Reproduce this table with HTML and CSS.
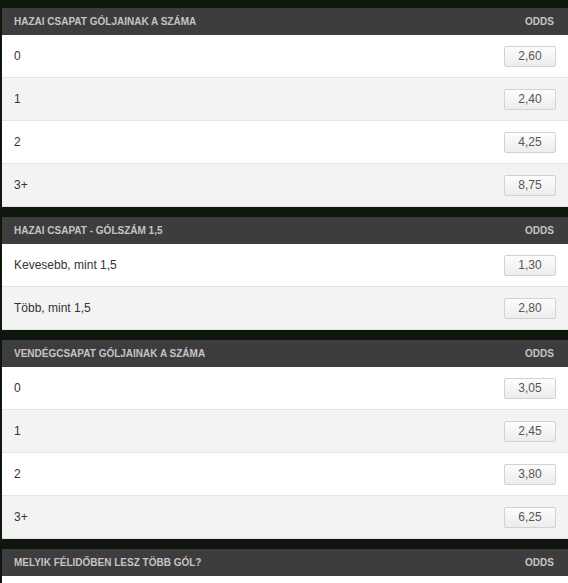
FILE: index.html
```html
<!DOCTYPE html>
<html lang="hu">

<head>
    <meta charset="UTF-8">
    <meta name="viewport" content="width=device-width, initial-scale=1.0">
    <title>Odds</title>
    <link rel="stylesheet" href="styles.css">
</head>

<body>
    <div class="market">
        <div class="market-head">
            <span>Hazai csapat góljainak a száma</span>
            <span>Odds</span>
        </div>
        <div class="row"><span>0</span><button class="odd">2,60</button></div>
        <div class="row"><span>1</span><button class="odd">2,40</button></div>
        <div class="row"><span>2</span><button class="odd">4,25</button></div>
        <div class="row"><span>3+</span><button class="odd">8,75</button></div>
    </div>

    <div class="market">
        <div class="market-head">
            <span>Hazai csapat - gólszám 1,5</span>
            <span>Odds</span>
        </div>
        <div class="row"><span>Kevesebb, mint 1,5</span><button class="odd">1,30</button></div>
        <div class="row"><span>Több, mint 1,5</span><button class="odd">2,80</button></div>
    </div>

    <div class="market">
        <div class="market-head">
            <span>Vendégcsapat góljainak a száma</span>
            <span>Odds</span>
        </div>
        <div class="row"><span>0</span><button class="odd">3,05</button></div>
        <div class="row"><span>1</span><button class="odd">2,45</button></div>
        <div class="row"><span>2</span><button class="odd">3,80</button></div>
        <div class="row"><span>3+</span><button class="odd">6,25</button></div>
    </div>

    <div class="market">
        <div class="market-head">
            <span>Melyik félidőben lesz több gól?</span>
            <span>Odds</span>
        </div>
        <!-- rows of this market are below the fold -->
        <div class="row"></div>
    </div>
</body>

</html>
```

FILE: styles.css
```css
body {
    margin: 0;
    padding: 8px 0 0 2px;
    background-color: #0e160e;
    font-family: "Liberation Sans", Arial, sans-serif;
}

.market {
    margin-bottom: 10px;
}

.market-head {
    height: 27px;
    display: flex;
    align-items: center;
    justify-content: space-between;
    padding: 0 14px 0 12px;
    background-color: #3d3d3d;
    color: #c4c4c4;
    font-size: 10px;
    font-weight: bold;
    text-transform: uppercase;
}

.row {
    height: 42px;
    display: flex;
    align-items: center;
    justify-content: space-between;
    padding: 0 12px 0 12px;
    background-color: #fff;
    border-bottom: 1px solid #e3e3e3;
    color: #333;
    font-size: 12px;
}

.row:nth-child(odd) {
    background-color: #f3f3f3;
}

.odd {
    width: 52px;
    height: 21px;
    padding: 0;
    border: 1px solid #d2d2d2;
    border-radius: 2px;
    background: linear-gradient(#fdfdfd, #ececec);
    color: #555;
    font-family: "Liberation Sans", Arial, sans-serif;
    font-size: 12px;
    text-align: center;
}
```
